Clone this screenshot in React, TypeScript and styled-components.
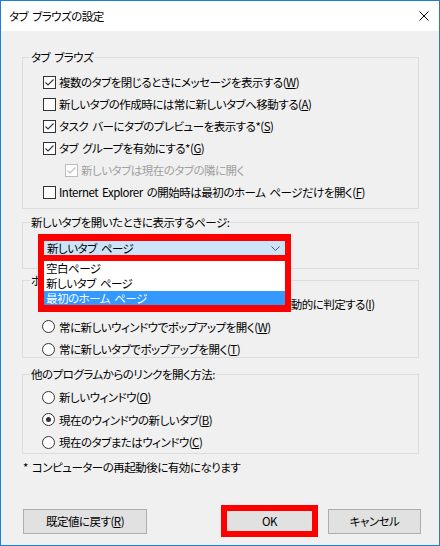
import React from 'react';
import styled, { createGlobalStyle } from 'styled-components';

const GlobalStyle = createGlobalStyle`
  html, body {
    margin: 0;
    padding: 0;
    background: #ffffff;
  }
  body {
    font-family: "Noto Sans CJK JP", "Noto Sans", sans-serif;
    font-size: 11.5px;
    letter-spacing: -0.5px;
    word-spacing: 2px;
    color: #000000;
    font-feature-settings: "palt";
  }
`;

const Window = styled.div`
  width: 440px;
  height: 546px;
  box-sizing: border-box;
  border: 1px solid #1c7fd6;
  background: #f0f0f0;
  display: flex;
  flex-direction: column;
`;

const TitleBar = styled.div`
  height: 30px;
  background: #ffffff;
  display: flex;
  align-items: center;
  justify-content: space-between;
  padding-left: 8px;
`;

const CloseButton = styled.div`
  width: 30px;
  height: 30px;
  display: flex;
  align-items: center;
  justify-content: center;
`;

const Content = styled.div`
  padding: 18px 20px 0 21px;
  display: flex;
  flex-direction: column;
`;

const Group = styled.fieldset<{ $mt: number; $pt: number; $pb: number; $gap: number }>`
  margin: ${(p) => p.$mt}px 0 0;
  padding: ${(p) => p.$pt}px 0 ${(p) => p.$pb}px 7px;
  border: 1px solid #dcdcdc;
  min-width: 0;
  display: flex;
  flex-direction: column;
  gap: ${(p) => p.$gap}px;
`;

const Legend = styled.legend`
  padding: 0 1px;
  height: 16px;
  line-height: 16px;
`;

const OptionRow = styled.div<{ $indent?: number; $disabled?: boolean }>`
  display: flex;
  align-items: center;
  gap: 3px;
  height: 14px;
  line-height: 14px;
  margin-left: ${(p) => p.$indent ?? 13}px;
  color: ${(p) => (p.$disabled ? '#a0a0a0' : '#000000')};
  white-space: nowrap;
`;

const RadioRow = styled(OptionRow)`
  gap: 4px;
  margin-left: 12px;
`;

const Label = styled.span`
  white-space: nowrap;
`;

const Box = styled.span<{ $disabled?: boolean }>`
  width: 13px;
  height: 13px;
  box-sizing: border-box;
  border: 1px solid ${(p) => (p.$disabled ? '#bcbcbc' : '#333333')};
  background: #ffffff;
  flex: none;
  display: flex;
`;

const Circle = styled.span`
  width: 13px;
  height: 13px;
  box-sizing: border-box;
  border: 1px solid #333333;
  border-radius: 50%;
  background: #ffffff;
  flex: none;
  display: flex;
  align-items: center;
  justify-content: center;
`;

const Dot = styled.span`
  width: 5px;
  height: 5px;
  border-radius: 50%;
  background: #333333;
`;

const ComboFrame = styled.div`
  position: relative;
  width: 253px;
  box-sizing: border-box;
  margin: 4px 0 0 8px;
  padding: 7px 6px 6px;
  background: #ff0000;
`;

const Combo = styled.div`
  height: 14px;
  line-height: 14px;
  background: #cce4f7;
  display: flex;
  align-items: center;
  justify-content: space-between;
  padding: 0 5px 0 3px;
`;

const Popup = styled.div`
  position: absolute;
  top: 100%;
  left: 0;
  width: 100%;
  box-sizing: border-box;
  padding: 0 6px 7px;
  background: #ff0000;
  z-index: 2;
`;

const PopupList = styled.div`
  background: #ffffff;
  display: flex;
  flex-direction: column;
`;

const PopupItem = styled.div<{ $selected?: boolean; $h: number }>`
  height: ${(p) => p.$h}px;
  line-height: ${(p) => p.$h}px;
  padding-left: 2px;
  background: ${(p) => (p.$selected ? '#3399ff' : 'transparent')};
  color: ${(p) => (p.$selected ? '#ffffff' : '#000000')};
`;

const Note = styled.div`
  margin-top: 6px;
  padding-left: 1px;
  line-height: 14px;
`;

const Footer = styled.div`
  margin-top: auto;
  display: flex;
  align-items: center;
  padding: 0 18px 8px 22px;
`;

const Button = styled.button<{ $w: number }>`
  width: ${(p) => p.$w}px;
  height: 25px;
  box-sizing: border-box;
  border: 1px solid #adadad;
  background: #e1e1e1;
  font: inherit;
  letter-spacing: inherit;
  color: #000000;
  padding: 0;
`;

const PrimaryButton = styled(Button)`
  height: 32px;
  border: 6px solid #ff0000;
  margin-left: auto;
  margin-right: 10px;
`;

const Check = ({ checked, disabled }: { checked?: boolean; disabled?: boolean }) => (
  <Box $disabled={disabled}>
    {checked && (
      <svg width="11" height="11" viewBox="0 0 11 11">
        <polyline
          points="1.5,5.5 4,8 9.5,2.5"
          fill="none"
          stroke={disabled ? '#bcbcbc' : '#333333'}
          strokeWidth="1.1"
        />
      </svg>
    )}
  </Box>
);

const Radio = ({ checked }: { checked?: boolean }) => <Circle>{checked && <Dot />}</Circle>;

const App: React.FC = () => {
  return (
    <>
      <GlobalStyle />
      <Window>
        <TitleBar>
          <span>タブ ブラウズの設定</span>
          <CloseButton>
            <svg width="10" height="10" viewBox="0 0 10 10">
              <path d="M0.5 0.5 L9.5 9.5 M9.5 0.5 L0.5 9.5" stroke="#000" strokeWidth="1" />
            </svg>
          </CloseButton>
        </TitleBar>

        <Content>
          <Group $mt={0} $pt={10} $pb={9} $gap={8}>
            <Legend>タブ ブラウズ</Legend>
            <OptionRow>
              <Check checked />
              <Label>複数のタブを閉じるときにメッセージを表示する(<u>W</u>)</Label>
            </OptionRow>
            <OptionRow>
              <Check />
              <Label>新しいタブの作成時には常に新しいタブへ移動する(<u>A</u>)</Label>
            </OptionRow>
            <OptionRow>
              <Check checked />
              <Label>タスク バーにタブのプレビューを表示する*(<u>S</u>)</Label>
            </OptionRow>
            <OptionRow>
              <Check checked />
              <Label>タブ グループを有効にする*(<u>G</u>)</Label>
            </OptionRow>
            <OptionRow $indent={35} $disabled>
              <Check checked disabled />
              <Label>新しいタブは現在のタブの隣に開く</Label>
            </OptionRow>
            <OptionRow>
              <Check />
              <Label>Internet Explorer の開始時は最初のホーム ページだけを開く(<u>F</u>)</Label>
            </OptionRow>
          </Group>

          <Group $mt={5} $pt={0} $pb={7} $gap={0}>
            <Legend>新しいタブを開いたときに表示するページ:</Legend>
            <ComboFrame>
              <Combo>
                <span>新しいタブ ページ</span>
                <svg width="9" height="5" viewBox="0 0 9 5">
                  <polyline points="0.5,0.5 4.5,4.5 8.5,0.5" fill="none" stroke="#555" strokeWidth="1" />
                </svg>
              </Combo>
              <Popup>
                <PopupList>
                  <PopupItem $h={15}>空白ページ</PopupItem>
                  <PopupItem $h={15}>新しいタブ ページ</PopupItem>
                  <PopupItem $h={14} $selected>
                    最初のホーム ページ
                  </PopupItem>
                </PopupList>
              </Popup>
            </ComboFrame>
          </Group>

          <Group $mt={3} $pt={9} $pb={1} $gap={8.5}>
            <Legend>ポップアップの発生時:</Legend>
            <RadioRow>
              <Radio checked />
              <Label>ポップアップを開く方法を Internet Explorer で自動的に判定する(<u>I</u>)</Label>
            </RadioRow>
            <RadioRow>
              <Radio />
              <Label>常に新しいウィンドウでポップアップを開く(<u>W</u>)</Label>
            </RadioRow>
            <RadioRow>
              <Radio />
              <Label>常に新しいタブでポップアップを開く(<u>T</u>)</Label>
            </RadioRow>
          </Group>

          <Group $mt={8} $pt={8} $pb={4} $gap={8.5}>
            <Legend>他のプログラムからのリンクを開く方法:</Legend>
            <RadioRow>
              <Radio />
              <Label>新しいウィンドウ(<u>O</u>)</Label>
            </RadioRow>
            <RadioRow>
              <Radio checked />
              <Label>現在のウィンドウの新しいタブ(<u>B</u>)</Label>
            </RadioRow>
            <RadioRow>
              <Radio />
              <Label>現在のタブまたはウィンドウ(<u>C</u>)</Label>
            </RadioRow>
          </Group>

          <Note>* コンピューターの再起動後に有効になります</Note>
        </Content>

        <Footer>
          <Button $w={124}>
            既定値に戻す(<u>R</u>)
          </Button>
          <PrimaryButton $w={97}>OK</PrimaryButton>
          <Button $w={93}>キャンセル</Button>
        </Footer>
      </Window>
    </>
  );
};

export default App;
